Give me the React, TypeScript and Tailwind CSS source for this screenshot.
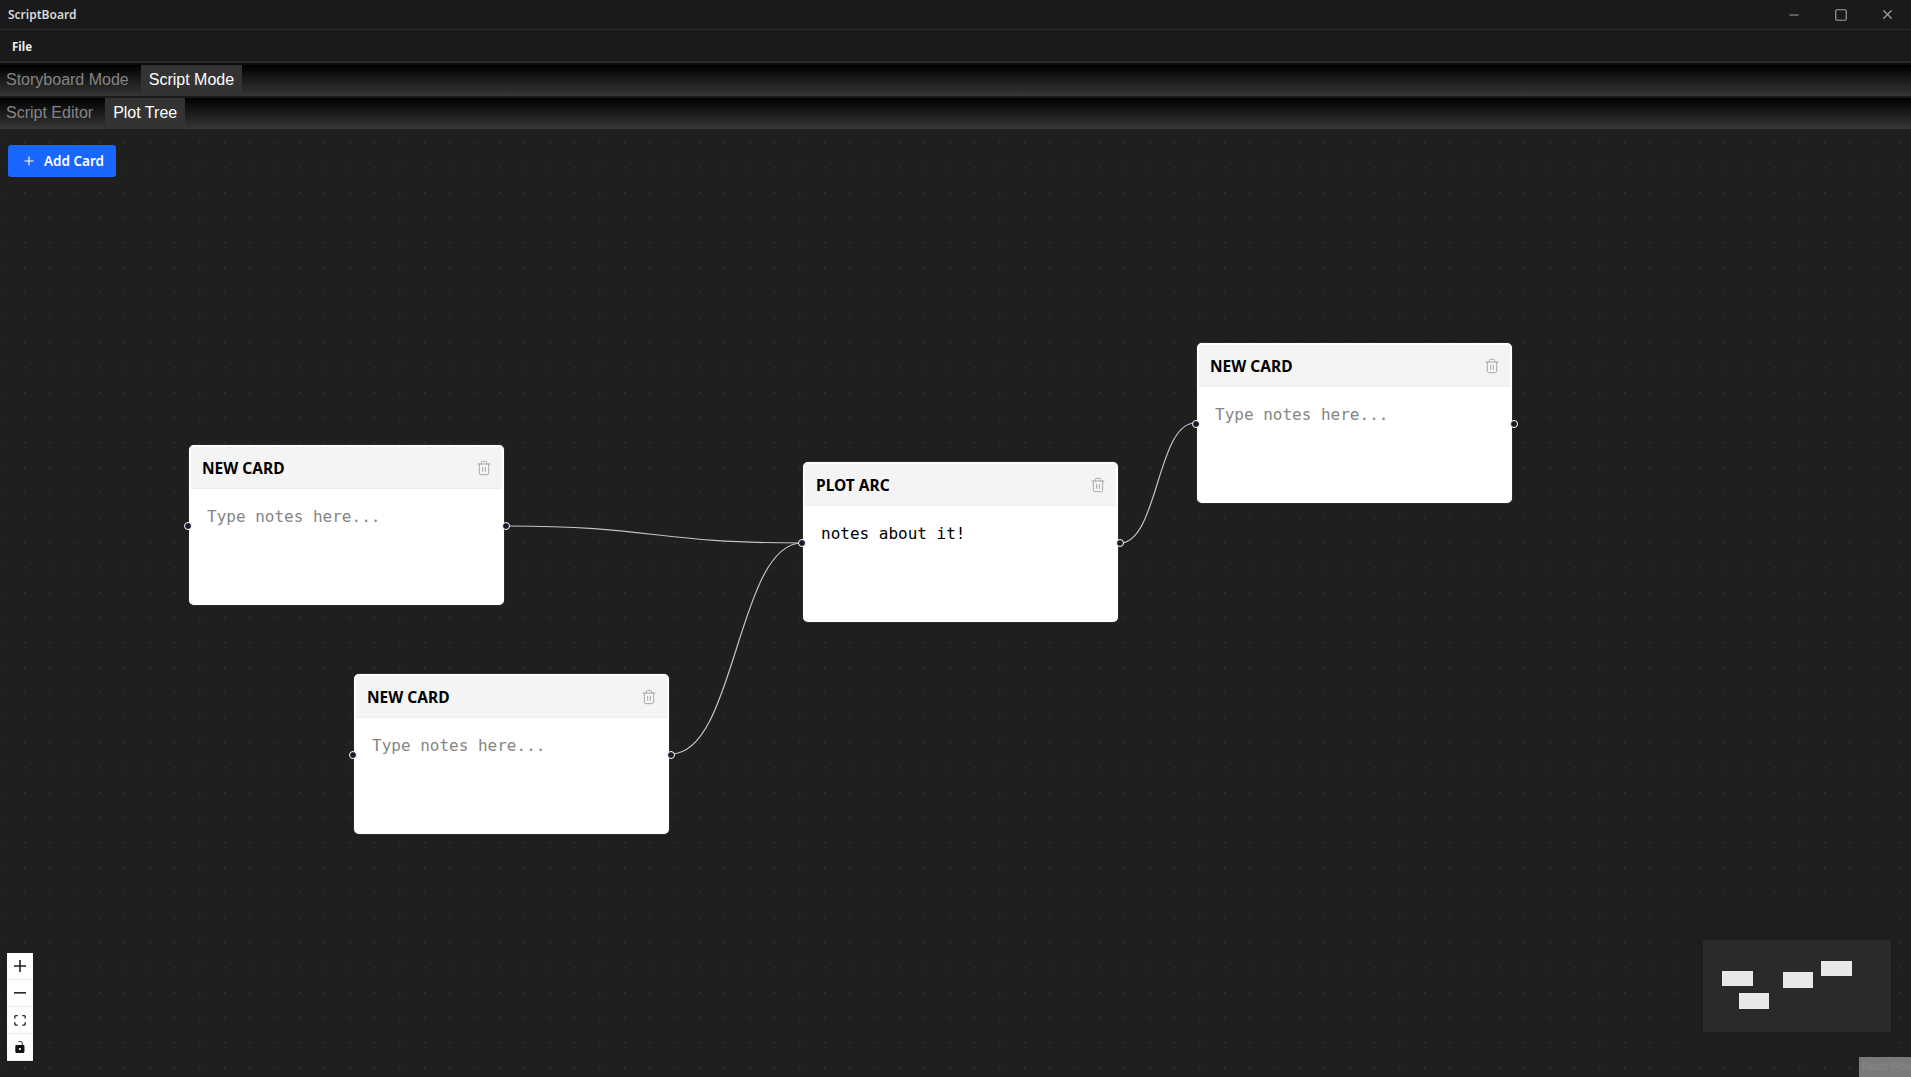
import { Trash2, Plus, Minus, X, Square } from "lucide-react";

interface CardData {
  title: string;
  notes?: string;
  x: number;
  y: number;
}

const cards: CardData[] = [
  { title: "NEW CARD", x: 189, y: 316 },
  { title: "NEW CARD", x: 354, y: 545 },
  { title: "PLOT ARC", notes: "notes about it!", x: 803, y: 333 },
  { title: "NEW CARD", x: 1197, y: 214 },
];

const miniNodes = [
  "left-[19px] top-[31px] h-[15px] w-[31px]",
  "left-[36px] top-[53px] h-[16px] w-[30px]",
  "left-[80px] top-[32px] h-[16px] w-[30px]",
  "left-[118px] top-[21px] h-[15px] w-[31px]",
];

function Handle({ side }: { side: "left" | "right" }) {
  return (
    <span
      className={`absolute top-[75px] h-2 w-2 rounded-full border border-white bg-[#1a192b] ${
        side === "left" ? "left-[-7px]" : "right-[-8px]"
      }`}
    />
  );
}

function Card({ card }: { card: CardData }) {
  return (
    <div
      className="absolute h-[160px] w-[315px] rounded-[5px] border-2 border-white bg-white shadow-[0_0_1px_rgba(190,190,190,0.8)]"
      style={{ left: card.x, top: card.y }}
    >
      <div className="flex h-[42px] items-center justify-between border-b border-[#ececec] bg-[#f4f4f4] pl-[11px] pr-[10px] pt-0.5 font-['Noto_Sans',sans-serif] text-[15.5px] font-bold text-black">
        <span>{card.title}</span>
        <Trash2 size={16} strokeWidth={1.5} className="-mt-0.5 text-[#a8a8a8]" />
      </div>
      <div
        className={`pl-4 pt-[18px] font-['DejaVu_Sans_Mono',monospace] text-base leading-5 ${
          card.notes ? "text-black" : "text-[#858585]"
        }`}
      >
        {card.notes ?? "Type notes here..."}
      </div>
      <Handle side="left" />
      <Handle side="right" />
    </div>
  );
}

function ControlButton({ children }: { children: React.ReactNode }) {
  return (
    <button className="flex h-[27px] w-[26px] items-center justify-center border-b border-[#eeeeee] bg-white">
      {children}
    </button>
  );
}

function TabRow({ items, active }: { items: string[]; active: string }) {
  return (
    <div className="flex h-[31px] bg-linear-to-b/srgb from-black to-[#363636] pl-1.5 font-['Liberation_Sans',sans-serif] text-base">
      {items.map((item) => (
        <div
          key={item}
          className={
            item === active
              ? "flex items-center bg-[#333333] px-2 pb-0.5 text-white"
              : "flex items-center pb-0.5 pr-3 text-[#858585]"
          }
        >
          {item}
        </div>
      ))}
    </div>
  );
}

export default function App() {
  return (
    <div className="flex h-[1077px] w-[1911px] flex-col overflow-hidden bg-[#1f1f1f]">
      <div className="flex h-[30px] items-center justify-between border-b border-[#2b2b2b] bg-[#1a1a1a] pl-2 font-['Noto_Sans',sans-serif] text-xs font-semibold text-[#d8d8d8]">
        <span>ScriptBoard</span>
        <div className="flex items-center text-[#a0a0a0]">
          <span className="flex w-[46px] justify-center">
            <Minus size={14} />
          </span>
          <span className="flex w-[47px] justify-center">
            <Square size={14} />
          </span>
          <span className="flex w-[47px] justify-center">
            <X size={15} />
          </span>
        </div>
      </div>
      <div className="flex h-[33px] items-center border-b-2 border-[#2b2b2b] bg-[#1a1a1a] pl-3 pt-0.5 font-['Noto_Sans',sans-serif] text-[11.5px] font-bold text-[#eeeeee]">
        File
      </div>
      <div className="h-[2px] bg-[#0a0a0a]" />
      <TabRow items={["Storyboard Mode", "Script Mode"]} active="Script Mode" />
      <div className="h-[2px] bg-[#1a1a1a]" />
      <TabRow items={["Script Editor", "Plot Tree"]} active="Plot Tree" />

      <div className="relative flex-1 bg-[#1f1f1f] bg-[radial-gradient(circle,#2f2f2f_1px,transparent_1px)] bg-[length:25px_25px] bg-[position:12px_1px]">
        <svg className="absolute inset-0 h-full w-full" fill="none" stroke="#c4c4c8" strokeWidth="1.2">
          <path d="M506 397 C654 397 654 414 802 414" />
          <path d="M671 625 C736 625 737 414 802 414" />
          <path d="M1120 414 C1158 414 1157 294 1195 294" />
        </svg>

        {cards.map((card) => (
          <Card key={card.title + card.x} card={card} />
        ))}

        <button className="absolute left-2 top-4 flex h-8 w-[108px] items-center gap-2 rounded-[3px] bg-[#1a66ff] pl-[14px] font-['Noto_Sans',sans-serif] text-[13.5px] font-semibold text-white">
          <Plus size={14} />
          Add Card
        </button>

        <div className="absolute bottom-4 left-[7px] flex flex-col">
          <ControlButton>
            <svg viewBox="0 0 32 32" className="h-3 w-3 fill-[#222222]">
              <path d="M32 18.133H18.133V32h-4.266V18.133H0v-4.266h13.867V0h4.266v13.867H32z" />
            </svg>
          </ControlButton>
          <ControlButton>
            <svg viewBox="0 0 32 5" className="h-[2px] w-3 fill-[#222222]">
              <path d="M0 0h32v4.2H0z" />
            </svg>
          </ControlButton>
          <ControlButton>
            <svg viewBox="0 0 32 30" className="h-[11px] w-3 fill-[#222222]">
              <path d="M3.692 4.63c0-.53.4-.938.939-.938h5.215V0H4.708C2.13 0 0 2.054 0 4.63v5.216h3.692V4.63zM27.354 0h-5.2v3.692h5.17c.53 0 .984.4.984.939v5.215H32V4.631A4.624 4.624 0 0027.354 0zm.954 24.83c0 .532-.4.94-.939.94h-5.215v3.768h5.215c2.577 0 4.631-2.13 4.631-4.707v-5.139h-3.692v5.139zm-23.677.94c-.531 0-.939-.4-.939-.94v-5.138H0v5.139c0 2.577 2.13 4.707 4.708 4.707h5.138V25.77H4.631z" />
            </svg>
          </ControlButton>
          <ControlButton>
            <svg viewBox="0 0 25 32" className="h-3 w-[10px] fill-[#111111]">
              <path d="M21.333 10.667H19.81V7.619C19.81 3.429 16.38 0 12.19 0c-1.512 0-2.97.448-4.22 1.29l1.69 1.69c.76-.42 1.61-.65 2.53-.65 2.9 0 5.28 2.38 5.28 5.29v3.05H3.048A3.056 3.056 0 000 13.714v15.238A3.056 3.056 0 003.048 32h18.285a3.056 3.056 0 003.048-3.048V13.714a3.056 3.056 0 00-3.048-3.047zM12.19 24.533a3.056 3.056 0 01-3.047-3.047 3.056 3.056 0 013.047-3.048 3.056 3.056 0 013.048 3.048 3.056 3.056 0 01-3.048 3.047z" />
            </svg>
          </ControlButton>
        </div>

        <div className="absolute bottom-[15px] right-[14px] flex h-[152px] w-[200px] items-center justify-center bg-[#1e1e1e]">
          <div className="relative h-[92px] w-[188px] bg-[#2a2a2a]">
            {miniNodes.map((cls) => (
              <div key={cls} className={`absolute bg-[#e8e8ea] ${cls}`} />
            ))}
          </div>
        </div>

        <div className="absolute bottom-0 right-0 h-5 w-[52px] overflow-hidden whitespace-nowrap bg-[#7a7a7a] pl-[3px] font-['Liberation_Sans',sans-serif] text-[10px] leading-5 text-[#888888]">
          React Flow
        </div>
      </div>
    </div>
  );
}
